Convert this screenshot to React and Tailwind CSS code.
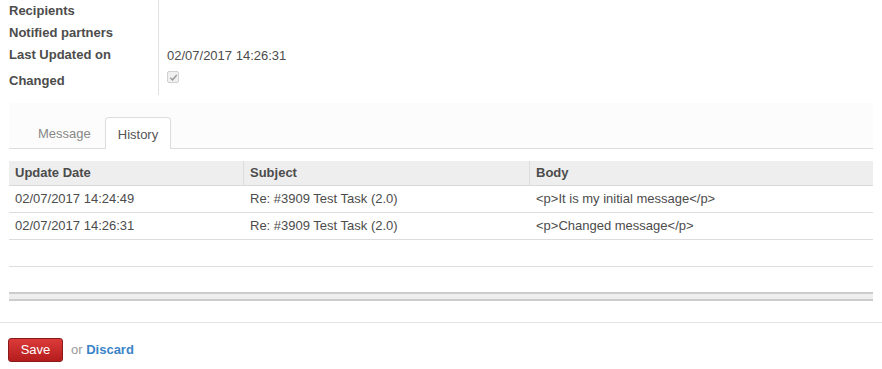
export default function App() {
    const rows = [
        { date: "02/07/2017 14:24:49", subject: "Re: #3909 Test Task (2.0)", body: "<p>It is my initial message</p>" },
        { date: "02/07/2017 14:26:31", subject: "Re: #3909 Test Task (2.0)", body: "<p>Changed message</p>" },
    ];

    return (
        <div className="w-[882px] h-[369px] bg-white text-[13px] text-[#4c4c4c] font-['Liberation_Sans',Arial,sans-serif] overflow-hidden">
            <div className="flex h-[95px]">
                <div className="w-[159px] border-r border-[#e0e0e0] pl-[9px] pt-[2px] font-bold">
                    <div className="h-[22px] leading-[18px]">Recipients</div>
                    <div className="h-[22px] leading-[18px]">Notified partners</div>
                    <div className="h-[26px] leading-[18px]">Last Updated on</div>
                    <div className="h-[22px] leading-[18px]">Changed</div>
                </div>
                <div className="pl-[8px] pt-[46px]">
                    <div className="h-[26px] leading-[20px]">02/07/2017 14:26:31</div>
                    <div className="w-[12px] h-[12px] mt-[-1px] border border-[#d0d0d0] rounded-[2px] bg-[#f0f0f0] flex items-center justify-center">
                        <svg width="9" height="9" viewBox="0 0 10 10">
                            <path d="M1.5 5.2 L4 7.6 L8.6 2.2" fill="none" stroke="#9a9a9a" strokeWidth="1.6" />
                        </svg>
                    </div>
                </div>
            </div>

            <div className="mx-[9px] mt-[8px] w-[864px] bg-[#fcfcfc] pt-[14px]">
                <div className="flex border-b border-[#dddddd] pl-[2px] h-[32px]">
                    <div className="pl-[27px] pr-[14px] pt-[7px] text-[#888888]">Message</div>
                    <div className="px-[12px] pt-[7px] border border-b-0 border-[#dddddd] rounded-t-[4px] bg-white -mb-px text-[#555555]">History</div>
                </div>
            </div>

            <div className="mx-[9px] w-[864px] mt-[12px]">
                <div className="grid grid-cols-[235px_286px_343px] bg-[#eeeeee] border-b border-[#d8d8d8] h-[25px] font-bold items-center">
                    <div className="pl-[6px] border-r border-[#dddddd] h-full flex items-center">Update Date</div>
                    <div className="pl-[6px] border-r border-[#dddddd] h-full flex items-center">Subject</div>
                    <div className="pl-[6px]">Body</div>
                </div>
                {rows.map((r) => (
                    <div key={r.date} className="grid grid-cols-[235px_286px_343px] border-b border-[#dddddd] h-[27px] items-center">
                        <div className="pl-[6px]">{r.date}</div>
                        <div className="pl-[6px]">{r.subject}</div>
                        <div className="pl-[6px]">{r.body}</div>
                    </div>
                ))}
                <div className="h-[27px] border-b border-[#dddddd]"></div>
                <div className="mt-[25px] h-[9px] bg-[#eeeeee] border-y-2 border-[#cccccc]"></div>
            </div>

            <div className="mt-[21px] border-t border-[#e4e4e4] pt-[15px] pl-[8px] flex items-center gap-[8px]">
                <button className="w-[55px] h-[24px] rounded-[3px] border border-[#8a1a1a] bg-gradient-to-b from-[#dc3a3a] to-[#b41c1c] text-white text-[13px]">
                    Save
                </button>
                <span className="text-[#999999]">or <a className="text-[#3a84c8] font-bold">Discard</a></span>
            </div>
        </div>
    );
}
